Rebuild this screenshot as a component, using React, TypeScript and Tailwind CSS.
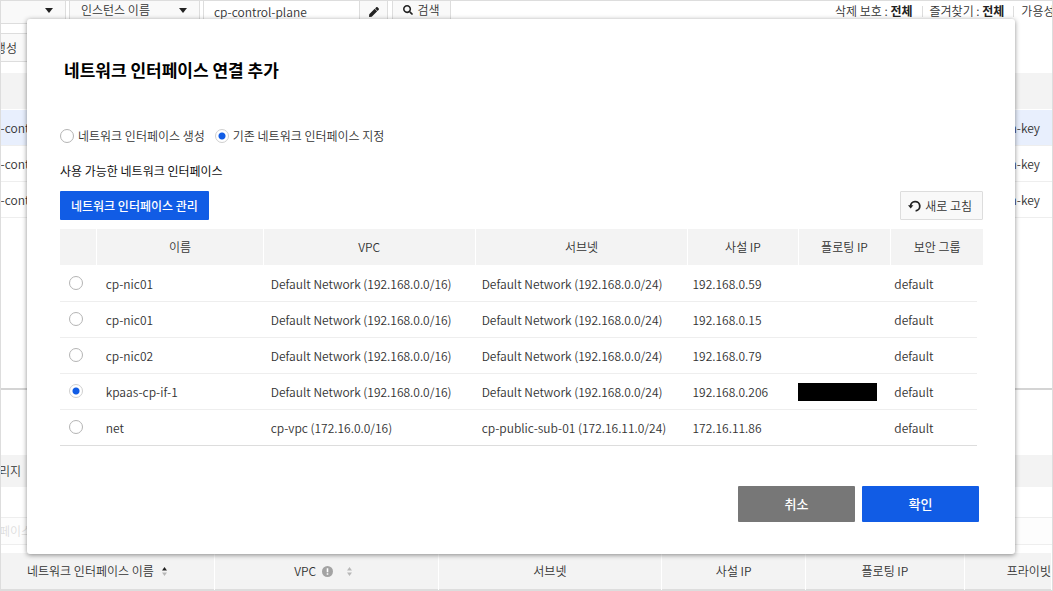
import { useState } from "react";
import { FaPen, FaSearch } from "react-icons/fa";

type Nic = {
  id: string;
  name: string;
  vpc: string;
  subnet: string;
  privateIp: string;
  maskedFloatingIp?: boolean;
  group: string;
};

const nics: Nic[] = [
  { id: "nic-1", name: "cp-nic01", vpc: "Default Network (192.168.0.0/16)", subnet: "Default Network (192.168.0.0/24)", privateIp: "192.168.0.59", group: "default" },
  { id: "nic-2", name: "cp-nic01", vpc: "Default Network (192.168.0.0/16)", subnet: "Default Network (192.168.0.0/24)", privateIp: "192.168.0.15", group: "default" },
  { id: "nic-3", name: "cp-nic02", vpc: "Default Network (192.168.0.0/16)", subnet: "Default Network (192.168.0.0/24)", privateIp: "192.168.0.79", group: "default" },
  { id: "nic-4", name: "kpaas-cp-if-1", vpc: "Default Network (192.168.0.0/16)", subnet: "Default Network (192.168.0.0/24)", privateIp: "192.168.0.206", maskedFloatingIp: true, group: "default" },
  { id: "nic-5", name: "net", vpc: "cp-vpc (172.16.0.0/16)", subnet: "cp-public-sub-01 (172.16.11.0/24)", privateIp: "172.16.11.86", group: "default" },
];

const radioClass =
  "m-0 size-3.5 shrink-0 appearance-none rounded-full border border-[#b4b4b4] bg-white checked:border-[#cfcfcf] checked:bg-[radial-gradient(circle,#115ce5_0,#115ce5_3px,transparent_4px)]";

function Caret() {
  return (
    <svg className="pointer-events-none absolute top-[7px] right-3 h-[5px] w-2" viewBox="0 0 8 5" aria-hidden="true">
      <path d="M0 0h8L4 5z" fill="#222" />
    </svg>
  );
}

function SortIcon({ active }: { active?: boolean }) {
  return (
    <svg className="h-[9px] w-[5px]" viewBox="0 0 5 9" aria-hidden="true">
      <path d="M0 3.5h5L2.5 0z" fill={active ? "#222" : "#b8b8b8"} />
      <path d="M0 5.5h5L2.5 9z" fill="#b8b8b8" />
    </svg>
  );
}

function NicColumns() {
  return (
    <colgroup>
      <col className="w-[4%]" />
      <col className="w-[18%]" />
      <col className="w-[23%]" />
      <col className="w-[23%]" />
      <col className="w-[12%]" />
      <col className="w-[10%]" />
      <col className="w-[10%]" />
    </colgroup>
  );
}

function Toolbar() {
  return (
    <div className="flex h-[23px] items-stretch">
      <div className="relative w-[65px] border-r border-b border-[#ddd] bg-[#f9f9f9]">
        <select aria-label="상태" className="h-full w-full appearance-none bg-transparent" />
        <Caret />
      </div>
      <div className="relative ml-[3px] w-[131px] border-x border-b border-[#ddd] bg-[#f9f9f9]">
        <select aria-label="검색 조건" className="h-[18px] w-full appearance-none bg-transparent pl-[11px]">
          <option>인스턴스 이름</option>
        </select>
        <Caret />
      </div>
      <input
        aria-label="검색어"
        defaultValue="cp-control-plane"
        className="ml-[3px] w-[157px] border-x border-b border-[#ddd] bg-white pl-2.5 outline-none"
      />
      <button aria-label="편집" className="flex w-7 items-center justify-center border-r border-b border-[#ddd] bg-[#f9f9f9] text-[#222]">
        <FaPen className="size-2.5" />
      </button>
      <button className="ml-1 flex w-[59px] items-center justify-center gap-1 border-x border-b border-[#ddd] bg-[#f9f9f9] pb-1">
        <FaSearch className="size-2.5 text-[#222]" />
        검색
      </button>
      <div className="ml-auto flex h-5 w-[217px] items-center gap-[7px] overflow-hidden whitespace-nowrap">
        <span>삭제 보호 : <b className="text-[#222]">전체</b></span>
        <span className="ml-0.5 h-[11px] w-px shrink-0 bg-[#ddd]" />
        <span>즐겨찾기 : <b className="text-[#222]">전체</b></span>
        <span className="ml-0.5 h-[11px] w-px shrink-0 bg-[#ddd]" />
        <span>가용성 영역</span>
      </div>
    </div>
  );
}

function Background() {
  return (
    <div className="min-h-screen overflow-hidden border border-[#ddd]">
      <Toolbar />
      <div className="mt-[9px] flex">
        <button className="-ml-14 h-[29px] w-28 border border-[#ddd] bg-[#f9f9f9] pl-0.5 text-left">
          인스턴스 생성
        </button>
      </div>
      <table className="mt-[11px] w-full table-fixed border-b border-[#ddd]">
        <thead>
          <tr className="h-9 border-b border-white bg-[#f3f3f3]">
            <th aria-label="이름" />
            <th aria-label="인증키" />
          </tr>
        </thead>
        <tbody>
          {[0, 1, 2].map((i) => (
            <tr key={i} className="h-9 border-b border-[#eee] first:bg-[#e8effd] [&>td]:p-0 [&>td]:pt-0.5">
              <td><span className="-ml-3.5">cp-control-plane</span></td>
              <td className="text-right"><span className="pr-3">n-key</span></td>
            </tr>
          ))}
        </tbody>
      </table>
      <div className="mt-[170px] h-0.5 bg-[#d4d4d4]" />
      <div className="mt-[65px] flex h-8 items-center bg-[#f3f3f3]">
        <span className="-ml-6">스토리지</span>
      </div>
      <div className="mt-[30px] flex h-7 items-center border-y border-[#eee] bg-[#fdfdfd] text-[#ddd]">
        <span className="-ml-[71px]">네트워크 인터페이스</span>
      </div>
      <table className="mt-2 w-full table-fixed border-b border-[#ddd]">
        <colgroup>
          <col className="w-[20.3%]" />
          <col className="w-[21.3%]" />
          <col className="w-[21.3%]" />
          <col className="w-[13.7%]" />
          <col className="w-[15.1%]" />
          <col />
        </colgroup>
        <thead>
          <tr className="h-[37px] bg-[#f3f3f3] [&>th]:border-r [&>th]:border-white [&>th]:p-0 [&>th]:pt-px [&>th]:font-[350]">
            <th>
              <span className="flex items-center gap-2 pl-[26px]">네트워크 인터페이스 이름 <SortIcon active /></span>
            </th>
            <th>
              <span className="flex items-center justify-center gap-1.5 pr-1.5">
                VPC
                <svg className="size-[11px]" viewBox="0 0 11 11" aria-hidden="true">
                  <circle cx="5.5" cy="5.5" r="5.5" fill="#a3a3a3" />
                  <path d="M4.7 2.2h1.6v4H4.7zM4.7 7.2h1.6v1.6H4.7z" fill="#fff" />
                </svg>
                <span className="ml-2"><SortIcon /></span>
              </span>
            </th>
            <th>서브넷</th>
            <th>사설 IP</th>
            <th>플로팅 IP</th>
            <th className="overflow-hidden whitespace-nowrap">
              <span className="block pl-[42px] text-left">프라이빗 도메인</span>
            </th>
          </tr>
        </thead>
      </table>
    </div>
  );
}

export default function App() {
  const [mode, setMode] = useState("existing");
  const [selected, setSelected] = useState("nic-4");

  return (
    <div className="relative overflow-hidden bg-white font-['Noto_Sans_CJK_KR',sans-serif] text-[12px] leading-[18px] font-[350] text-[#333]">
      <Background />
      <div
        role="dialog"
        aria-labelledby="dialog-title"
        className="absolute top-[19px] right-[38px] left-[27px] rounded-[3px] bg-white px-8 pt-[39px] pb-8 pl-[33px] shadow-[0_1px_5px_rgba(0,0,0,0.45)]"
      >
        <h1 id="dialog-title" className="pl-1 text-[17px] leading-6 font-bold text-black">
          네트워크 인터페이스 연결 추가
        </h1>
        <div className="mt-[45px] flex items-center gap-2.5">
          <label className="flex items-center gap-1">
            <input type="radio" name="mode" className={radioClass} checked={mode === "new"} onChange={() => setMode("new")} />
            네트워크 인터페이스 생성
          </label>
          <label className="flex items-center gap-1">
            <input type="radio" name="mode" className={radioClass} checked={mode === "existing"} onChange={() => setMode("existing")} />
            기존 네트워크 인터페이스 지정
          </label>
        </div>
        <h2 className="mt-[17px] font-normal text-[#111]">사용 가능한 네트워크 인터페이스</h2>
        <div className="mt-[11px] flex justify-between">
          <button className="h-[29px] rounded-[1px] bg-[#115ce5] px-[11px] font-medium text-white">네트워크 인터페이스 관리</button>
          <button className="flex h-[29px] items-center gap-1 rounded-[1px] border border-[#ddd] bg-[#f9f9f9] px-[7px] pr-2.5">
            <svg className="h-3 w-[13px]" viewBox="0 0 13 12" fill="none" aria-hidden="true">
              <path d="M2.6 6.4A4.6 4.6 0 1 1 7.6 10.8" stroke="#222" strokeWidth="1.8" />
              <path d="M0 5.2h5.4L2.7 8.6z" fill="#222" />
            </svg>
            새로 고침
          </button>
        </div>
        <table className="mt-[9px] w-full table-fixed">
          <NicColumns />
          <thead>
            <tr className="h-9 bg-[#f3f3f3] [&>th]:border-r [&>th]:border-white [&>th]:p-0 [&>th]:font-[350] [&>th:last-child]:border-r-0">
              <th aria-label="선택" />
              <th>이름</th>
              <th>VPC</th>
              <th>서브넷</th>
              <th>사설 IP</th>
              <th>플로팅 IP</th>
              <th>보안 그룹</th>
            </tr>
          </thead>
        </table>
        <div className="pr-1.5">
          <table className="w-full table-fixed">
            <NicColumns />
            <tbody>
              {nics.map((nic) => (
                <tr key={nic.id} className="h-9 border-b border-[#eee] last:border-[#ddd] [&>td]:pt-0.5 [&>td]:pl-[9px] [&>td:first-child]:pt-0">
                  <td>
                    <input
                      type="radio"
                      name="nic"
                      aria-label={nic.name}
                      className={`${radioClass} block`}
                      checked={selected === nic.id}
                      onChange={() => setSelected(nic.id)}
                    />
                  </td>
                  <td>{nic.name}</td>
                  <td>{nic.vpc}</td>
                  <td>{nic.subnet}</td>
                  <td>{nic.privateIp}</td>
                  <td>{nic.maskedFloatingIp && <span className="-ml-[5px] block h-[18px] w-[79px] bg-black" />}</td>
                  <td>{nic.group}</td>
                </tr>
              ))}
            </tbody>
          </table>
        </div>
        <div className="mt-10 flex justify-end gap-[7px] pr-1">
          <button className="h-9 w-[117px] rounded-[1px] bg-[#777] text-[13px] font-medium text-white">취소</button>
          <button className="h-9 w-[117px] rounded-[1px] bg-[#115ce5] text-[13px] font-medium text-white">확인</button>
        </div>
      </div>
    </div>
  );
}
